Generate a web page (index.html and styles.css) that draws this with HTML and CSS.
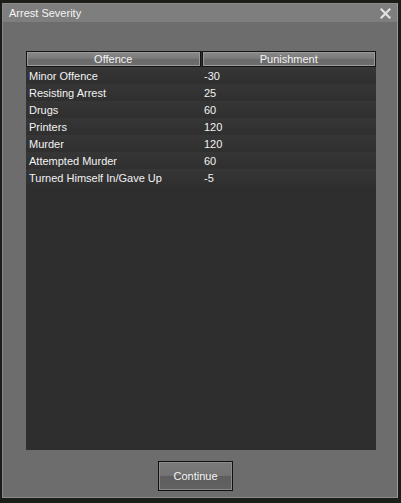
FILE: index.html
```html
<!DOCTYPE html>
<html>
<head>
<meta charset="utf-8">
<link rel="stylesheet" href="styles.css">
</head>
<body>
<div class="window">
  <div class="titlebar">
    <span class="title">Arrest Severity</span>
    <svg class="close" width="11" height="11" viewBox="0 0 11 11"><path d="M1.5 1.5 L9.5 9.5 M9.5 1.5 L1.5 9.5" stroke="#e2e2e2" stroke-width="2.2" stroke-linecap="square"/></svg>
  </div>
  <div class="content">
    <div class="list">
      <div class="head">
        <div class="hcell">Offence</div>
        <div class="hcell">Punishment</div>
      </div>
      <div class="row"><span class="c1">Minor Offence</span><span class="c2">-30</span></div>
      <div class="row"><span class="c1">Resisting Arrest</span><span class="c2">25</span></div>
      <div class="row"><span class="c1">Drugs</span><span class="c2">60</span></div>
      <div class="row"><span class="c1">Printers</span><span class="c2">120</span></div>
      <div class="row"><span class="c1">Murder</span><span class="c2">120</span></div>
      <div class="row"><span class="c1">Attempted Murder</span><span class="c2">60</span></div>
      <div class="row"><span class="c1">Turned Himself In/Gave Up</span><span class="c2">-5</span></div>
    </div>
    <div class="actions">
      <button class="btn">Continue</button>
    </div>
  </div>
</div>
</body>
</html>
```

FILE: styles.css
```css
html, body {
  margin: 0;
  padding: 0;
}
body {
  width: 401px;
  height: 503px;
  background: #1b1d18;
  font-family: "Liberation Sans", Arial, sans-serif;
  font-size: 11px;
  color: #f2f2f2;
  padding: 3px 3px 5px 2px;
  box-sizing: border-box;
  overflow: hidden;
}
.window {
  height: 495px;
  background: #6d6d6d;
  border: 1px solid #8a8a8a;
  border-right-color: #9a9a9a;
  box-sizing: border-box;
  display: flex;
  flex-direction: column;
}
.titlebar {
  height: 18px;
  background: #7e7e7e;
  display: flex;
  align-items: center;
  justify-content: space-between;
  padding: 0 6px 0 6px;
}
.title {
  color: #f4f4f4;
  font-size: 11px;
}
.close {
  display: block;
}
.content {
  flex: 1;
  display: flex;
  flex-direction: column;
  padding: 29px 21px 6px 23px;
}
.list {
  height: 399px;
  background: #2e2e2e;
  display: flex;
  flex-direction: column;
}
.head {
  display: flex;
  gap: 1px;
  height: 16px;
}
.hcell {
  flex: 1;
  border: 1px solid #151515;
  background: linear-gradient(#8a8a8a 0%, #7a7a7a 45%, #6a6a6a 55%, #6e6e6e 100%);
  box-shadow: inset 0 0 0 1px #999;
  color: #f4f4f4;
  text-align: center;
  line-height: 14px;
  box-sizing: border-box;
}
.row {
  height: 17px;
  display: flex;
  align-items: center;
  background: linear-gradient(#363636, #2f2f2f);
  padding-top: 1px;
  box-sizing: border-box;
}
.c1 {
  width: 176px;
  padding-left: 3px;
  box-sizing: border-box;
}
.c2 {
  padding-left: 2px;
}
.actions {
  display: flex;
  justify-content: center;
  padding-top: 11px;
  padding-right: 11px;
}
.btn {
  width: 75px;
  height: 30px;
  border: 1px solid #111;
  background: linear-gradient(#7a7a7a 0%, #727272 50%, #5e5e5e 50%, #626262 100%);
  box-shadow: inset 0 0 0 1px #8a8a8a;
  color: #f4f4f4;
  font-family: "Liberation Sans", Arial, sans-serif;
  font-size: 11px;
  padding: 0;
}
```
